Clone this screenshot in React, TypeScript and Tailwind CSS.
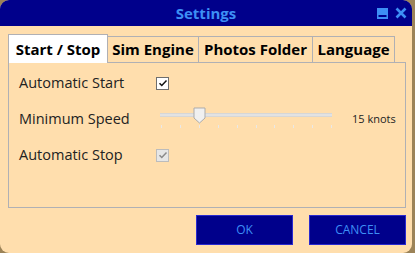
import React from "react"

const font = { fontFamily: '"Open Sans", "Noto Sans", sans-serif' }

function Check({ disabled }: { disabled?: boolean }) {
  return (
    <div
      className={`w-[13px] h-[13px] border flex items-center justify-center ${
        disabled ? "bg-[#e6e6e6] border-[#bcbcbc]" : "bg-white border-[#6e6e6e]"
      }`}
    >
      <svg width="10" height="10" viewBox="0 0 10 10">
        <path
          d="M1.5 5.2l2.3 2.3 4.7-5"
          fill="none"
          stroke={disabled ? "#8a8a8a" : "#111"}
          strokeWidth="1.5"
        />
      </svg>
    </div>
  )
}

function Slider() {
  const ticks = [0, 1, 2, 3, 4, 5, 6, 7, 8, 9]
  return (
    <div className="relative w-[172px] h-[24px]">
      {/* track */}
      <div className="absolute left-0 right-0 top-[6px] h-[4px] bg-[#e2e2e2] border-y border-[#d6d6d6]" />
      {/* ticks */}
      {ticks.map((i) => (
        <div
          key={i}
          className="absolute top-[18px] w-[1px] h-[3px] bg-[#e8e8e8]"
          style={{ left: 1 + i * 18.9 }}
        />
      ))}
      {/* thumb */}
      <svg className="absolute left-[33px] top-0" width="13" height="17" viewBox="0 0 13 17">
        <path d="M1 1h11v10l-5.5 5L1 11z" fill="#f0f0f0" stroke="#ababab" />
      </svg>
    </div>
  )
}

export default function App() {
  const tab = "h-[26px] flex items-center justify-center border border-b-0 border-[#b0b0b4] text-[15px] font-bold text-black -ml-px"
  const btn = "w-[97px] h-[30px] bg-[#00008b] border border-[#2a2ad0] text-[#3d8ff5] text-[12px]"
  return (
    <div className="w-[415px] h-[253px] bg-[#9c8358]" style={font}>
      <div className="w-[412px] h-full rounded-[9px] overflow-hidden bg-[#ffdead] flex flex-col">
        {/* Title bar */}
        <div className="h-[26px] bg-[#00008b] relative flex items-center justify-center">
          <span className="text-[15px] font-bold text-[#3d8ff5]">Settings</span>
          <div className="absolute right-[5px] top-[7px] flex items-center gap-[7px]">
            <svg width="11" height="11" viewBox="0 0 11 11">
              <rect x="0" y="0" width="11" height="11" fill="#3d8ff5" />
              <rect x="1.5" y="7" width="8" height="2" fill="#00008b" />
            </svg>
            <svg width="12" height="12" viewBox="0 0 12 12">
              <path d="M1.5 1.5l9 9M10.5 1.5l-9 9" stroke="#3d8ff5" strokeWidth="2.6" />
            </svg>
          </div>
        </div>

        <div className="pl-[8px] flex flex-col">
          {/* Tabs */}
          <div className="flex items-end mt-[8px] pl-px">
            <div className="w-[100px] h-[29px] flex items-center justify-center bg-white border border-b-0 border-[#b0b0b4] text-[15px] font-bold text-black -ml-px z-10 -mb-px">
              Start / Stop
            </div>
            <div className={`${tab} w-[92px]`}>Sim Engine</div>
            <div className={`${tab} w-[115px]`}>Photos Folder</div>
            <div className={`${tab} w-[83px]`}>Language</div>
          </div>

          {/* Panel */}
          <div className="h-[146px] w-[398px] border border-[#b0b0b4] pl-[10px] pt-[2px] text-[14.5px] text-[#222]">
            <div className="flex items-center h-[36px]">
              <span className="w-[137px]">Automatic Start</span>
              <Check />
            </div>
            <div className="flex items-center h-[36px]">
              <span className="w-[141px]">Minimum Speed</span>
              <Slider />
              <span className="ml-[20px] text-[11px]">15 knots</span>
            </div>
            <div className="flex items-center h-[36px]">
              <span className="w-[137px]">Automatic Stop</span>
              <Check disabled />
            </div>
          </div>

          {/* Buttons */}
          <div className="w-[398px] flex justify-end gap-[16px] mt-[7px]">
            <button className={btn}>OK</button>
            <button className={btn}>CANCEL</button>
          </div>
        </div>
      </div>
    </div>
  )
}
